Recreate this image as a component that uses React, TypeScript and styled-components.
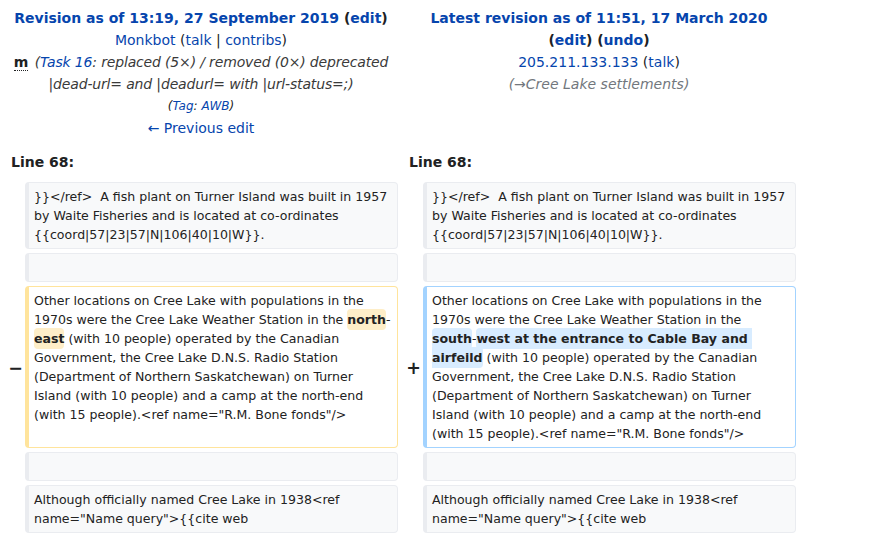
import React from "react";
import styled, { createGlobalStyle, css } from "styled-components";

const Global = createGlobalStyle`
  html, body { margin: 0; padding: 0; background: #fff; }
  body {
    font-family: "DejaVu Sans", "Noto Sans", sans-serif;
    color: #202122;
  }
`;

type Kind = "context" | "deleted" | "added";

const DiffTable = styled.table`
  border-spacing: 4px;
  table-layout: fixed;
  width: 800px;
  font-size: 14px;
  line-height: 22px;
`;

const Col = styled.col<{ $w: number }>`
  width: ${(p) => p.$w}px;
`;

const TitleCell = styled.td`
  text-align: center;
  vertical-align: top;
  padding: 3px 5px 1px;
`;

const Line = styled.div``;

const Small = styled.div`
  font-size: 12px;
  font-style: italic;
`;

const Link = styled.a`
  color: #0645ad;
  text-decoration: none;
  cursor: pointer;
`;

const Comment = styled.span<{ $muted?: boolean }>`
  font-style: italic;
  letter-spacing: ${(p) => (p.$muted ? "0" : "-0.16px")};
  color: ${(p) => (p.$muted ? "#72777d" : "#3a3a3a")};
`;

const Minor = styled.abbr`
  font-weight: bold;
  text-decoration: none;
  border-bottom: 1px dotted #202122;
  margin-right: 2px;
`;

const LineNoCell = styled.td`
  font-weight: bold;
  padding: 7px 7px 5px;
  vertical-align: top;
`;

const Marker = styled.td`
  text-align: right;
  font-weight: bold;
  font-size: 17.5px;
  line-height: 1.2;
  vertical-align: middle;
  padding: 2px 0 0;
  color: #202122;
`;

const MarkerGlyph = styled.span`
  margin-right: -2px;
`;

const kindStyles: Record<Kind, ReturnType<typeof css>> = {
  context: css`
    background: #f8f9fa;
    border-color: #eaecf0;
  `,
  deleted: css`
    background: #fff;
    border-color: #ffe49c;
  `,
  added: css`
    background: #fff;
    border-color: #a3d3ff;
  `,
};

const DiffCell = styled.td<{ $kind: Kind }>`
  font-size: 12.55px;
  line-height: 19px;
  vertical-align: top;
  white-space: pre-wrap;
  overflow-wrap: break-word;
  border-style: solid;
  border-width: 1px 1px 1px 4px;
  border-radius: 4px;
  padding: 4px 6px 4px 5px;
  color: #222;
  ${(p) => kindStyles[p.$kind]}
`;

const Change = styled.span<{ $kind: "deleted" | "added" }>`
  font-weight: bold;
  border-radius: 4px;
  padding: 0.25em 0;
  background: ${(p) => (p.$kind === "deleted" ? "#feeec8" : "#d8ecff")};
`;

const Row = styled.tr``;

const ctx1 =
  "}}</ref>  A fish plant on Turner Island was built in 1957 by Waite Fisheries and is located at co-ordinates {{coord|57|23|57|N|106|40|10|W}}.";
const ctx2 = 'Although officially named Cree Lake in 1938<ref name="Name query">{{cite web';
const head =
  "Other locations on Cree Lake with populations in the 1970s were the Cree Lake Weather Station in the ";
const tail =
  ' (with 10 people) operated by the Canadian Government, the Cree Lake D.N.S. Radio Station (Department of Northern Saskatchewan) on Turner Island (with 10 people) and a camp at the north-end (with 15 people).<ref name="R.M. Bone fonds"/>';

export default function App() {
  return (
    <>
      <Global />
      <DiffTable>
        <colgroup>
          <Col $w={17} />
          <Col $w={373} />
          <Col $w={17} />
          <Col $w={373} />
        </colgroup>
        <tbody>
          <Row>
            <TitleCell colSpan={2}>
              <Line>
                <strong>
                  <Link>Revision as of 13:19, 27 September 2019</Link> (<Link>edit</Link>)
                </strong>
              </Line>
              <Line>
                <Link>Monkbot</Link> (<Link>talk</Link> | <Link>contribs</Link>)
              </Line>
              <Line>
                <Minor title="This is a minor edit">m</Minor>{" "}
                <Comment>
                  (<Link>Task 16</Link>: replaced (5×) / removed (0×) deprecated |dead-url= and
                  |deadurl= with |url-status=;)
                </Comment>
              </Line>
              <Small>
                (<Link>Tag</Link>: <Link>AWB</Link>)
              </Small>
              <Line>
                <Link>← Previous edit</Link>
              </Line>
            </TitleCell>
            <TitleCell colSpan={2}>
              <Line>
                <strong>
                  <Link>Latest revision as of 11:51, 17 March 2020</Link> (<Link>edit</Link>) (
                  <Link>undo</Link>)
                </strong>
              </Line>
              <Line>
                <Link>205.211.133.133</Link> (<Link>talk</Link>)
              </Line>
              <Line>
                <Comment $muted>(→Cree Lake settlements)</Comment>
              </Line>
            </TitleCell>
          </Row>
          <Row>
            <LineNoCell colSpan={2}>Line 68:</LineNoCell>
            <LineNoCell colSpan={2}>Line 68:</LineNoCell>
          </Row>
          <Row>
            <Marker />
            <DiffCell $kind="context">{ctx1}</DiffCell>
            <Marker />
            <DiffCell $kind="context">{ctx1}</DiffCell>
          </Row>
          <Row>
            <Marker />
            <DiffCell $kind="context">
              <br />
            </DiffCell>
            <Marker />
            <DiffCell $kind="context">
              <br />
            </DiffCell>
          </Row>
          <Row>
            <Marker>
              <MarkerGlyph>−</MarkerGlyph>
            </Marker>
            <DiffCell $kind="deleted">
              {head}
              <Change $kind="deleted">north</Change>-<Change $kind="deleted">east</Change>
              {tail}
            </DiffCell>
            <Marker>
              <MarkerGlyph>+</MarkerGlyph>
            </Marker>
            <DiffCell $kind="added">
              {head}
              <Change $kind="added">south</Change>-
              <Change $kind="added">west at the entrance to Cable Bay and airfeild</Change>
              {tail}
            </DiffCell>
          </Row>
          <Row>
            <Marker />
            <DiffCell $kind="context">
              <br />
            </DiffCell>
            <Marker />
            <DiffCell $kind="context">
              <br />
            </DiffCell>
          </Row>
          <Row>
            <Marker />
            <DiffCell $kind="context">{ctx2}</DiffCell>
            <Marker />
            <DiffCell $kind="context">{ctx2}</DiffCell>
          </Row>
        </tbody>
      </DiffTable>
    </>
  );
}
